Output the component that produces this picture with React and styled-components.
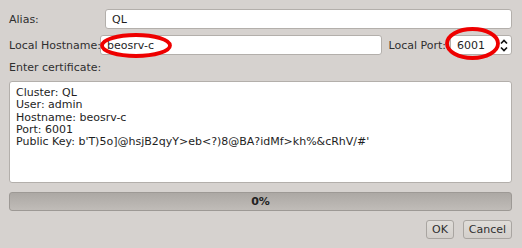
import styled, { createGlobalStyle } from "styled-components"

const Global = createGlobalStyle`
  html, body {
    margin: 0;
    padding: 0;
    background: #d6d2cf;
  }
  * { box-sizing: border-box; }
`

const Dialog = styled.div`
  position: relative;
  width: 522px;
  height: 248px;
  padding: 9px 10px 0 9px;
  display: flex;
  flex-direction: column;
  background: #d6d2cf;
  font-family: "DejaVu Sans", "Liberation Sans", sans-serif;
  font-size: 11px;
  color: #2f2f2f;
`

const Row = styled.div`
  display: flex;
  align-items: center;
  height: 20px;
  margin-top: ${p => p.top || 0}px;
`

const Label = styled.span`
  flex-shrink: 0;
  width: ${p => (p.w ? p.w + "px" : "auto")};
  margin: ${p => p.m || "0"};
  white-space: nowrap;
`

const Field = styled.div`
  position: relative;
  flex: ${p => (p.fixed ? "0 0 " + p.fixed + "px" : "1")};
  height: ${p => p.h || 20}px;
  background: #fff;
  border: 1px solid #b3afab;
  border-radius: 3px;
  padding: 0 6px;
  display: flex;
  align-items: center;
  color: #1e1e1e;
`

const Spin = styled.svg`
  position: absolute;
  right: 3px;
  top: 3px;
`

const Mark = styled.svg`
  position: absolute;
  pointer-events: none;
  overflow: visible;
`

const CertLabel = styled.div`
  margin-top: 6px;
  height: 13px;
  line-height: 13px;
`

const CertBox = styled.div`
  margin-top: 7px;
  height: 102px;
  background: #fff;
  border: 1px solid #b3afab;
  border-radius: 3px;
  padding: 5px 6px;
  white-space: pre;
  line-height: 12.3px;
  color: #1e1e1e;
`

const Progress = styled.div`
  margin-top: 9px;
  height: 19px;
  border: 1px solid #9d9995;
  border-radius: 3px;
  background: linear-gradient(#aca8a4, #c0bcb8);
  display: flex;
  align-items: center;
  justify-content: center;
  font-weight: bold;
  color: #222;
`

const Buttons = styled.div`
  margin-top: 9px;
  display: flex;
  justify-content: flex-end;
  gap: 9px;
`

const Button = styled.button`
  height: 19px;
  width: ${p => p.w}px;
  padding: 0;
  font-family: inherit;
  font-size: 11px;
  color: #2f2f2f;
  background: linear-gradient(#e0ddd9, #d3cfcb);
  border: 1px solid #a9a5a1;
  border-radius: 3px;
`

const Ellipse = ({ left, top, w, h }) => (
  <Mark style={{ left, top }} width={w} height={h}>
    <ellipse
      cx={w / 2}
      cy={h / 2}
      rx={w / 2 - 2}
      ry={h / 2 - 2}
      fill="none"
      stroke="#ee0000"
      strokeWidth="3.8"
    />
  </Mark>
)

const cert = `Cluster: QL
User: admin
Hostname: beosrv-c
Port: 6001
Public Key: b'T)5o]@hsjB2qyY>eb<?)8@BA?idMf>kh%&cRhV/#'`

export default function App() {
  return (
    <>
      <Global />
      <Dialog>
        <Row>
          <Label w={96}>Alias:</Label>
          <Field>QL</Field>
        </Row>
        <Row top={6}>
          <Label w={91}>Local Hostname:</Label>
          <Field>
            beosrv-c
            <Ellipse left={-1} top={-3} w={72} h={25} />
          </Field>
          <Label m="0 4px 0 6px">Local Port:</Label>
          <Field fixed={62}>
            6001
            <Spin width="8" height="13" viewBox="0 0 8 13">
              <polyline points="1,4.5 4,1.5 7,4.5" fill="none" stroke="#111" strokeWidth="1.7" />
              <polyline points="1,8.5 4,11.5 7,8.5" fill="none" stroke="#111" strokeWidth="1.7" />
            </Spin>
            <Ellipse left={-6} top={-9} w={55} h={33} />
          </Field>
        </Row>
        <CertLabel>Enter certificate:</CertLabel>
        <CertBox>{cert}</CertBox>
        <Progress>0%</Progress>
        <Buttons>
          <Button w={28}>OK</Button>
          <Button w={49}>Cancel</Button>
        </Buttons>
      </Dialog>
    </>
  )
}
